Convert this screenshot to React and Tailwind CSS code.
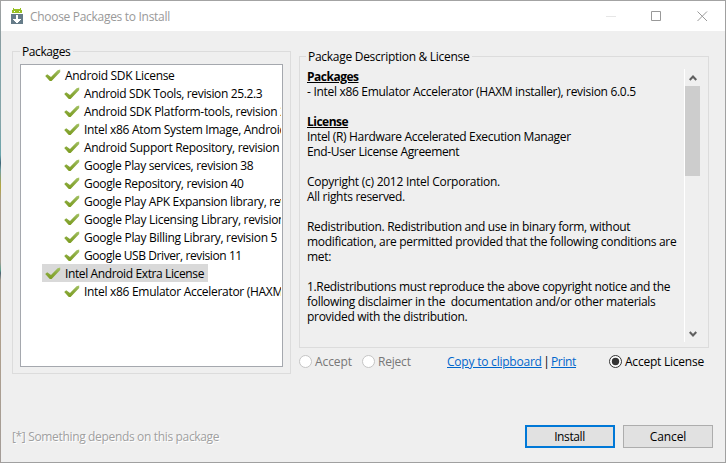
import React from "react";

const packages = [
  { label: "Android SDK License", group: true, fit: "tracking-[-0.3px]" },
  { label: "Android SDK Tools, revision 25.2.3", fit: "tracking-[-0.36px]" },
  { label: "Android SDK Platform-tools, revision 25.0.1", fit: "tracking-[-0.29px]" },
  { label: "Intel x86 Atom System Image, Android API 24", fit: "tracking-[-0.3px]" },
  { label: "Android Support Repository, revision 41", fit: "tracking-[-0.3px]" },
  { label: "Google Play services, revision 38", fit: "tracking-[-0.33px]" },
  { label: "Google Repository, revision 40", fit: "tracking-[-0.33px]" },
  { label: "Google Play APK Expansion library, revision 1", fit: "tracking-[-0.33px]" },
  { label: "Google Play Licensing Library, revision 1", fit: "tracking-[-0.3px]" },
  { label: "Google Play Billing Library, revision 5", fit: "tracking-[-0.3px]" },
  { label: "Google USB Driver, revision 11", fit: "tracking-[-0.41px]" },
  { label: "Intel Android Extra License", group: true, selected: true, fit: "tracking-[-0.38px]" },
  { label: "Intel x86 Emulator Accelerator (HAXM installer)", fit: "tracking-[-0.3px]" },
];

const license = [
  { text: "Packages", heading: true, fit: "tracking-[-0.5px]" },
  { text: "- Intel x86 Emulator Accelerator (HAXM installer), revision 6.0.5", fit: "tracking-[-0.3px]" },
  { text: "" },
  { text: "License", heading: true, fit: "tracking-[-0.5px]" },
  { text: "Intel (R) Hardware Accelerated Execution Manager", fit: "tracking-[-0.34px]" },
  { text: "End-User License Agreement", fit: "tracking-[-0.34px]" },
  { text: "" },
  { text: "Copyright (c) 2012 Intel Corporation.", fit: "tracking-[-0.26px]" },
  { text: "All rights reserved.", fit: "tracking-[-0.3px]" },
  { text: "" },
  { text: "Redistribution. Redistribution and use in binary form, without", fit: "tracking-[-0.32px]" },
  { text: "modification, are permitted provided that the following conditions are", fit: "tracking-[-0.3px]" },
  { text: "met:", fit: "tracking-[-0.3px]" },
  { text: "" },
  { text: "1.Redistributions must reproduce the above copyright notice and the", fit: "tracking-[-0.33px]" },
  { text: "following disclaimer in the  documentation and/or other materials", fit: "tracking-[-0.3px]" },
  { text: "provided with the distribution.", fit: "tracking-[-0.3px]" },
];

function Check() {
  return (
    <svg className="h-[13px] w-4 shrink-0" viewBox="0 0 16 13">
      <defs>
        <linearGradient id="leaf" x1="0" y1="0" x2="0" y2="1">
          <stop offset="0" stopColor="#a6c468" />
          <stop offset="0.5" stopColor="#8aaa3c" />
          <stop offset="1" stopColor="#7c9c20" />
        </linearGradient>
      </defs>
      <path d="M0.2 7 2.2 5.2 6 8 12.6 1.2 15.2 0.6 15.2 3 6.6 12 4.8 12Z" fill="url(#leaf)" />
    </svg>
  );
}

function AndroidIcon() {
  return (
    <svg className="h-4 w-3" viewBox="0 0 12 16" shapeRendering="crispEdges">
      <path d="M2 0h1v1h6V0h1v2h1v3H1V2h1z" fill="#97c024" />
      <path d="M3 3h1v1H3zM8 3h1v1H8z" fill="#fff" />
      <path d="M0 6h12v10H0z" fill="#667c89" />
      <path d="M5 7h2v4h3v1H9v1H8v1H7v1H5v-1H4v-1H3v-1H2v-1h3z" fill="#fff" />
    </svg>
  );
}

function Radio({ checked }) {
  return (
    <svg className="h-[13px] w-[13px] shrink-0" viewBox="0 0 13 13">
      <circle cx="6.5" cy="6.5" r="6" fill="#fff" stroke={checked ? "#333" : "#c4c4c4"} />
      {checked && <circle cx="6.5" cy="6.5" r="3.7" fill="#333" />}
    </svg>
  );
}

function Chevron({ down }) {
  return (
    <svg className={down ? "h-[6px] w-[8px] rotate-180" : "h-[6px] w-[8px]"} viewBox="0 0 8 6">
      <path d="M0.7 5 4 1.6 7.3 5" fill="none" stroke="#606060" strokeWidth="2.2" />
    </svg>
  );
}

function GroupBox({ title, className, legendClass, children }) {
  return (
    <fieldset className={`min-w-0 border border-[#dcdcdc] ${className}`}>
      <legend className={`h-[15px] leading-[15px] ${legendClass}`}>{title}</legend>
      {children}
    </fieldset>
  );
}

export default function App() {
  return (
    <div className="flex h-[463px] w-[726px] overflow-hidden font-['Open_Sans','Noto_Sans',sans-serif] text-[12px] leading-[15px] text-black">
      <div className="w-px shrink-0 bg-[linear-gradient(#a3a3a3_0px,#8a9ca0_40px,#7fa3a8_60px,#86a4a8_120px,#6aa5ac_155px,#3f6577_163px,#6f9da2_170px,#b5a63c_186px,#a89c8c_200px,#a59e94_262px,#5fa08c_270px,#4c6474_273px,#a59c90_280px,#b0a08c_330px,#a39c98_463px)]" />
      <div className="flex w-[725px] flex-col border-y border-r border-t-[#a3a3a3] border-r-[#a0a0a0] border-b-[#a0a0a0] bg-[#efefef]">
        <header className="flex h-[30px] shrink-0 items-center bg-white pl-[10px]">
          <AndroidIcon />
          <h1 className="ml-[7px] text-[12px] tracking-[-0.3px] whitespace-nowrap text-[#999]">Choose Packages to Install</h1>
          <svg className="mr-[15px] ml-auto h-[11px] w-[104px]" viewBox="0 0 104 11" fill="none">
            <path d="M0 5.5h10" stroke="#e6e6e6" />
            <path d="M45.5 0.5h9v9h-9z" stroke="#999" />
            <path d="M91.5 0.5l9.5 9.5M101 0.5l-9.5 9.5" stroke="#999" />
          </svg>
        </header>

        <main className="flex h-[344px] shrink-0 pl-[11px]">
          <GroupBox title="Packages" className="mt-[13px] h-[330px] w-[279px] px-[7px]" legendClass="pr-[3px] pl-[2px] tracking-[-0.4px]">
            <ul className="mt-[5px] h-[303px] w-[263px] overflow-hidden border border-[#a5a8ae] bg-white pt-px pr-px pl-[21px]">
              {packages.map((p) => (
                <li key={p.label} className={`flex h-[18px] overflow-hidden whitespace-nowrap ${p.group ? "" : "pl-[19px]"}`}>
                  <span className={`flex h-[18px] items-center pl-[3px] ${p.selected ? "w-[166px] bg-[#d9d9d9]" : ""}`}>
                    <Check />
                    <span className={`ml-1 ${p.fit}`}>{p.label}</span>
                  </span>
                </li>
              ))}
            </ul>
          </GroupBox>

          <section className="ml-2 w-[410px]">
            <GroupBox title="Package Description & License" className="mt-[18px] h-[299px] w-[410px]" legendClass="ml-[6px] px-[2px] tracking-[-0.28px]">
              <div className="mt-[5px] flex h-[273px] pl-[7px]">
                <div className="w-[377px] whitespace-pre">
                  {license.map((l, i) => (
                    <p key={i} className={`h-[15px] ${l.fit || ""} ${l.heading ? "font-bold underline" : ""}`}>{l.text}</p>
                  ))}
                </div>
                <div className="flex w-4 flex-col items-center border-l border-white">
                  <div className="flex h-[17px] items-center"><Chevron /></div>
                  <div className="h-[90px] w-[15px] bg-[#cdcdcd]" />
                  <div className="mt-auto flex h-[17px] items-center"><Chevron down /></div>
                </div>
              </div>
            </GroupBox>
            <div className="mt-[6px] flex h-[15px] items-center whitespace-nowrap text-[#777]">
              <Radio />
              <span className="ml-[3px] w-[47px] tracking-[-0.1px]">Accept</span>
              <Radio />
              <span className="ml-[3px] w-[69px] tracking-[-0.2px]">Reject</span>
              <span className="flex w-[162px] text-black">
                <a className="w-[95px] tracking-[-0.22px] text-[#0066cc] underline">Copy to clipboard</a>
                <span className="w-[9px] text-center">|</span>
                <a className="tracking-[-0.35px] text-[#0066cc] underline">Print</a>
              </span>
              <Radio checked />
              <span className="ml-[3px] tracking-[-0.23px] text-black">Accept License</span>
            </div>
          </section>
        </main>

        <footer className="mt-[50px] flex h-[23px] shrink-0 items-center pl-[11px]">
          <span className="w-[513px] tracking-[-0.34px] whitespace-nowrap text-[#a0a0a0] [text-shadow:1px_1px_0_white]">[*] Something depends on this package</span>
          <button className="h-[23px] w-[90px] border-2 border-[#0078d7] bg-[#e1e1e1] pr-px tracking-[-0.4px]">Install</button>
          <button className="ml-2 h-[23px] w-[90px] border border-[#adadad] bg-[#e1e1e1] tracking-[-0.1px]">Cancel</button>
        </footer>
      </div>
    </div>
  );
}
